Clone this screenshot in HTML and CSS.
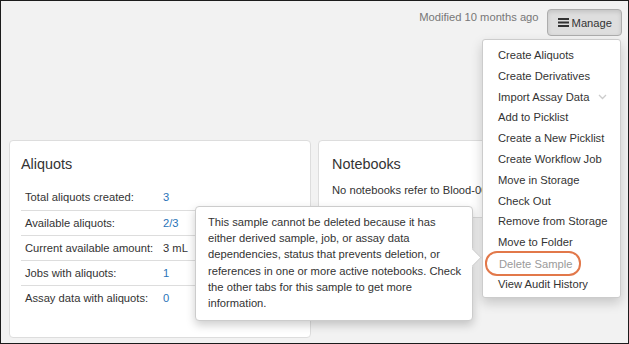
FILE: index.html
```html
<!DOCTYPE html>
<html lang="en">
<head>
    <title>Sample Overview</title>
    <meta charset="UTF-8" />
    <link rel="stylesheet" href="styles.css">
</head>
<body>
    <div class="frame">
        <div class="topbar">
            <span class="modified">Modified 10 months ago</span>
            <button class="manage-btn">
                <svg width="11" height="9" viewBox="0 0 11 9"><rect x="0" y="0" width="11" height="2" fill="#333"/><rect x="0" y="3.5" width="11" height="2" fill="#333"/><rect x="0" y="7" width="11" height="2" fill="#333"/></svg>
                Manage
            </button>
        </div>

        <div class="panels">
            <div class="panel aliquots">
                <h2>Aliquots</h2>
                <table class="stats">
                    <tr><td class="label">Total aliquots created:</td><td><a href="#">3</a></td></tr>
                    <tr><td class="label">Available aliquots:</td><td><a href="#">2/3</a></td></tr>
                    <tr><td class="label">Current available amount:</td><td>3 mL</td></tr>
                    <tr><td class="label">Jobs with aliquots:</td><td><a href="#">1</a></td></tr>
                    <tr><td class="label">Assay data with aliquots:</td><td><a href="#">0</a></td></tr>
                </table>
            </div>
            <div class="panel notebooks">
                <h2>Notebooks</h2>
                <p>No notebooks refer to Blood-0012.</p>
            </div>
        </div>

        <ul class="menu">
            <li>Create Aliquots</li>
            <li>Create Derivatives</li>
            <li class="has-sub">Import Assay Data
                <svg class="chev" width="9" height="6" viewBox="0 0 9 6"><path d="M1 1 L4.5 4.5 L8 1" fill="none" stroke="#ccc" stroke-width="1.3"/></svg>
            </li>
            <li>Add to Picklist</li>
            <li>Create a New Picklist</li>
            <li>Create Workflow Job</li>
            <li>Move in Storage</li>
            <li>Check Out</li>
            <li>Remove from Storage</li>
            <li>Move to Folder</li>
            <li class="disabled"><span class="circled">Delete Sample</span></li>
            <li>View Audit History</li>
        </ul>

        <div class="tooltip">
            This sample cannot be deleted because it has either derived sample, job, or assay data dependencies, status that prevents deletion, or references in one or more active notebooks. Check the other tabs for this sample to get more information.
        </div>
    </div>
</body>
</html>
```

FILE: styles.css
```css
* {
    margin: 0;
    padding: 0;
    box-sizing: border-box;
}

body {
    font-family: "Liberation Sans", Arial, sans-serif;
    font-size: 11.2px;
    color: #333;
    background: #f2f2f2;
}

.frame {
    position: relative;
    width: 629px;
    height: 344px;
    border: 1px solid #1c1c1c;
    background: #f2f2f2;
    overflow: hidden;
}

/* Header row */
.topbar {
    display: flex;
    justify-content: flex-end;
    align-items: flex-start;
    gap: 8px;
    padding: 8px 6px 0 0;
    height: 35px;
}

.modified {
    color: #777;
    line-height: 16px;
}

.manage-btn {
    display: flex;
    align-items: center;
    gap: 3px;
    height: 27px;
    padding: 0 9px 0 10px;
    font-family: inherit;
    font-size: 11.2px;
    color: #333;
    background: #dedede;
    border: 1px solid #adadad;
    border-radius: 4px;
    box-shadow: inset 0 2px 4px rgba(0,0,0,0.12);
}

/* Panels */
.panels {
    display: flex;
    align-items: flex-start;
    gap: 7px;
    margin-top: 104px;
    padding-left: 8px;
}

.panel {
    width: 302px;
    background: white;
    border: 1px solid #ddd;
    border-radius: 4px;
}

.panel h2 {
    font-size: 14.4px;
    font-weight: normal;
    line-height: 20px;
    color: #333;
}

.aliquots {
    padding: 13px 11px 27px 11px;
}

.aliquots h2 {
    margin-bottom: 11px;
}

.stats {
    width: 100%;
    border-collapse: collapse;
}

.stats td {
    height: 25px;
    padding: 0 4px;
    vertical-align: middle;
}

.stats tr + tr td {
    border-top: 1px solid #ddd;
}

.stats td.label {
    width: 138px;
}

.stats a {
    color: #2a74b8;
    text-decoration: none;
}

.notebooks {
    height: 78px;
    padding: 13px 13px;
}

.notebooks h2 {
    margin-bottom: 10px;
}

/* Manage dropdown */
.menu {
    position: absolute;
    top: 38px;
    left: 481px;
    width: 139px;
    list-style: none;
    background: white;
    border: 1px solid #ccc;
    border-radius: 3px;
    padding: 5px 0 2px 0;
    box-shadow: 0 5px 12px rgba(0,0,0,0.18);
}

.menu li {
    position: relative;
    height: 20.8px;
    line-height: 20.8px;
    padding-left: 15px;
    color: #333;
    white-space: nowrap;
}

.menu .chev {
    position: absolute;
    right: 13px;
    top: 7px;
}

.menu .disabled {
    color: #9a9a9a;
}

.circled {
    display: inline-block;
    margin-left: -13px;
    margin-top: -2px;
    padding: 0 12px;
    width: 96px;
    height: 25px;
    line-height: 22px;
    border: 2px solid #e2784a;
    border-radius: 12px;
}

/* Tooltip */
.tooltip {
    position: absolute;
    top: 205px;
    left: 194px;
    width: 278px;
    padding: 7px 8px 9px 12px;
    background: white;
    border: 1px solid #ccc;
    border-radius: 4px;
    line-height: 16.2px;
    color: #333;
    box-shadow: 0 4px 10px rgba(0,0,0,0.2);
}

.tooltip::after {
    content: "";
    position: absolute;
    top: 44px;
    right: -7px;
    width: 12px;
    height: 12px;
    background: white;
    border-top: 1px solid #ccc;
    border-right: 1px solid #ccc;
    transform: rotate(45deg);
}
```
